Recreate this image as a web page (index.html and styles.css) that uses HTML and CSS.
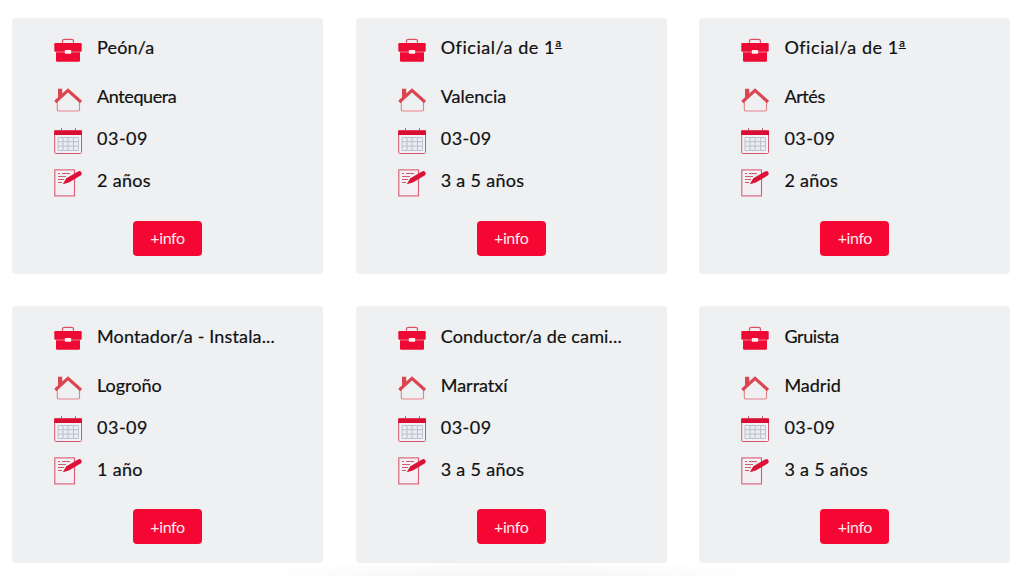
FILE: index.html
```
<!DOCTYPE html>
<html lang="es">
<head>
    <meta charset="UTF-8">
    <meta name="viewport" content="width=device-width, initial-scale=1.0">
    <title>Ofertas de empleo</title>
    <link rel="stylesheet" href="styles.css">
</head>
<body>
    <!-- Icons -->
    <svg class="sprite" width="0" height="0">
        <symbol id="job" viewBox="0 0 28 28">
            <path d="M8.500 7.500V5Q8.500 3.300 10.500 3.300H17.500Q19.500 3.300 19.500 5V7.500" fill="none" stroke="#dc5368" stroke-width="1.200"/>
            <path d="M1 7H27Q27.700 7 27.700 8V14.500Q27.700 15.700 26.500 15.700H1.500Q.3 15.700 .3 14.500V8Q.3 7 1 7Z" fill="#ef0a35"/>
            <path d="M2 16.300H26V24.500Q26 25.800 24.700 25.800H3.300Q2 25.800 2 24.500Z" fill="#ef0a35"/>
            <rect x="10.800" y="14" width="6.400" height="3.700" rx=".8" fill="#fff0f1"/>
        </symbol>
        <symbol id="place" viewBox="0 0 28 28">
            <path d="M3.300 15V24.500Q3.300 26 4.800 26H24Q25.500 26 25.500 24.500V15" fill="none" stroke="#e58088" stroke-width="1.100"/>
            <path d="M4 3.700H8.200V9L4 13Z" fill="#d94650"/>
            <path d="M1.300 17L14 5.300L27 17" fill="none" stroke="#d94650" stroke-width="3.200"/>
        </symbol>
        <symbol id="date" viewBox="0 0 28 28">
            <rect x=".7" y="4" width="26.800" height="22.500" rx="1" fill="#f4f1f4" stroke="#d7566f" stroke-width="1"/>
            <path d="M.2 3.300H28V8H.2Z" fill="#d70e32"/>
            <path d="M7.500 1.300V4M21.500 1.300V4" stroke="#c74b60" stroke-width="1"/>
            <path d="M4 10.500H24.500V23.500H4ZM4 14.700H24.500M4 19H24.500M9 10.500V23.500M14 10.500V23.500M19.500 10.500V23.500" fill="#e9edf2" stroke="#b3bdca" stroke-width=".9"/>
        </symbol>
        <symbol id="years" viewBox="0 0 28 28">
            <rect x=".8" y=".9" width="19.700" height="26" fill="#f2f0f2" stroke="#d75b70" stroke-width="1.100"/>
            <path d="M4 4.500H6M8 4.500H16M4 7.500H12M4 10.500H10M4 13.500H8" stroke="#cf5b70" stroke-width="1"/>
            <path d="M8.800 15.200L12.300 9.300L24.500 2.200Q26.300 1.500 27.300 3.200T27 6.300L14.800 13.600Z" fill="#dc1238"/>
        </symbol>
    </svg>

    <div class="offers">
        <div class="card">
            <div class="row title"><svg class="icon"><use href="#job"/></svg><span>Peón/a</span></div>
            <div class="row place tight"><svg class="icon"><use href="#place"/></svg><span>Antequera</span></div>
            <div class="row date"><svg class="icon"><use href="#date"/></svg><span>03-09</span></div>
            <div class="row years"><svg class="icon"><use href="#years"/></svg><span>2 años</span></div>
            <button type="button">+info</button>
        </div>
        <div class="card">
            <div class="row title wide"><svg class="icon"><use href="#job"/></svg><span>Oficial/a de 1<u>ª</u></span></div>
            <div class="row place"><svg class="icon"><use href="#place"/></svg><span>Valencia</span></div>
            <div class="row date"><svg class="icon"><use href="#date"/></svg><span>03-09</span></div>
            <div class="row years"><svg class="icon"><use href="#years"/></svg><span>3 a 5 años</span></div>
            <button type="button">+info</button>
        </div>
        <div class="card">
            <div class="row title wide"><svg class="icon"><use href="#job"/></svg><span>Oficial/a de 1<u>ª</u></span></div>
            <div class="row place tight"><svg class="icon"><use href="#place"/></svg><span>Artés</span></div>
            <div class="row date"><svg class="icon"><use href="#date"/></svg><span>03-09</span></div>
            <div class="row years"><svg class="icon"><use href="#years"/></svg><span>2 años</span></div>
            <button type="button">+info</button>
        </div>
        <div class="card">
            <div class="row title"><svg class="icon"><use href="#job"/></svg><span>Montador/a - Instala...</span></div>
            <div class="row place"><svg class="icon"><use href="#place"/></svg><span>Logroño</span></div>
            <div class="row date"><svg class="icon"><use href="#date"/></svg><span>03-09</span></div>
            <div class="row years"><svg class="icon"><use href="#years"/></svg><span>1 año</span></div>
            <button type="button">+info</button>
        </div>
        <div class="card">
            <div class="row title"><svg class="icon"><use href="#job"/></svg><span>Conductor/a de cami...</span></div>
            <div class="row place"><svg class="icon"><use href="#place"/></svg><span>Marratxí</span></div>
            <div class="row date"><svg class="icon"><use href="#date"/></svg><span>03-09</span></div>
            <div class="row years"><svg class="icon"><use href="#years"/></svg><span>3 a 5 años</span></div>
            <button type="button">+info</button>
        </div>
        <div class="card">
            <div class="row title tight"><svg class="icon"><use href="#job"/></svg><span>Gruista</span></div>
            <div class="row place"><svg class="icon"><use href="#place"/></svg><span>Madrid</span></div>
            <div class="row date"><svg class="icon"><use href="#date"/></svg><span>03-09</span></div>
            <div class="row years"><svg class="icon"><use href="#years"/></svg><span>3 a 5 años</span></div>
            <button type="button">+info</button>
        </div>
    </div>
</body>
</html>
```
FILE: styles.css
```
body {
    font-family: Lato, "Liberation Sans", sans-serif;
    background: radial-gradient(ellipse 270px 22px at 510px 580px, #f3f3f3, #fff) #fff;
    color: #111;
    margin: 0;
    height: 576px;
    overflow: hidden;
}

.sprite {
    display: block;
}

.offers {
    display: grid;
    grid-template-columns: repeat(3, 311px);
    grid-auto-rows: 256.5px;
    gap: 32px 32.700px;
    padding: 17.800px 0 0 12px;
}

.card {
    box-sizing: border-box;
    background-color: #eef0f2;
    border-radius: 4px;
    padding: 11px 20px 0 42px;
}

.row {
    display: flex;
    align-items: center;
    gap: 15px;
    height: 42px;
    font-size: 18px;
    white-space: nowrap;
}

.row span {
    line-height: 24px;
    padding-bottom: 5px;
    -webkit-text-stroke: 0.2px #111;
}

.row u {
    text-decoration-thickness: 1px;
    text-underline-offset: -6px;
}

.title {
    margin-bottom: 7px;
    letter-spacing: 0.15px;
}

.date {
    letter-spacing: 0.5px;
}

.years {
    letter-spacing: 0.3px;
}

.wide {
    letter-spacing: 0.55px;
}

.tight {
    letter-spacing: -0.4px;
}

.icon {
    width: 28px;
    height: 28px;
    flex: none;
}

button {
    display: block;
    width: 69px;
    height: 35px;
    margin: 17px 0 0 79px;
    padding: 0 0 1px;
    border: none;
    border-radius: 4px;
    background-color: #f60632;
    color: #ffe9ec;
    font-family: inherit;
    font-size: 16px;
    letter-spacing: -0.4px;
    cursor: pointer;
}
```
